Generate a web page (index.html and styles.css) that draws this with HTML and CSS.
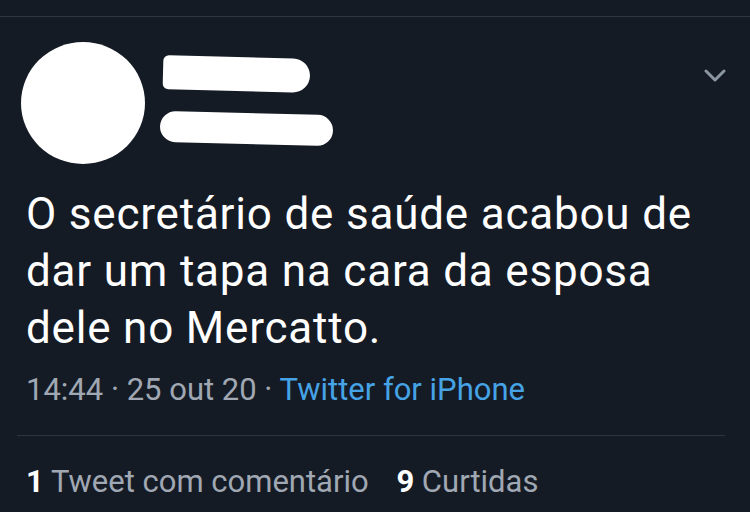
FILE: index.html
```html
<!DOCTYPE html>
<html>
<head>
<meta charset="utf-8">
<link rel="stylesheet" href="styles.css">
</head>
<body>
<div class="page">
  <div class="topline"></div>
  <div class="header">
    <div class="avatar"></div>
    <div class="names">
      <div class="bar bar1"></div>
      <div class="bar bar2"></div>
    </div>
    <svg class="chev" width="24" height="14" viewBox="0 0 24 14"><path d="M3 2 L12 11 L21 2" fill="none" stroke="#8b96a3" stroke-width="3" stroke-linecap="round" stroke-linejoin="round"/></svg>
  </div>
  <p class="tweet">O secretário de saúde acabou de dar um tapa na cara da esposa dele no Mercatto.</p>
  <div class="meta">14:44 · 25 out 20 · <span class="link">Twitter for iPhone</span></div>
  <div class="divider"></div>
  <div class="stats"><b>1</b> Tweet com comentário <span class="gap"></span><b>9</b> Curtidas</div>
</div>
</body>
</html>
```
FILE: styles.css
```css
html, body { margin: 0; padding: 0; }
body { background: #151b25; font-family: Roboto, "Noto Sans", sans-serif; }
.page { width: 750px; height: 512px; overflow: hidden; position: relative; }
.topline { height: 1px; background: #2d3744; margin-top: 16px; }
.header { display: flex; align-items: flex-start; height: 150px; margin-top: 25px; position: relative; }
.avatar { width: 124px; height: 122px; border-radius: 50%; background: #fff; margin-left: 21px; }
.names { display: flex; flex-direction: column; margin-left: 18px; margin-top: 15px; }
.bar { background: #fff; border-radius: 18px; }
.bar1 { width: 147px; height: 34px; border-radius: 6px 18px 18px 6px; transform: rotate(1.5deg); }
.bar2 { width: 173px; height: 31px; margin-top: 22px; margin-left: -3px; transform: rotate(1.5deg); }
.chev { position: absolute; right: 23px; top: 27px; }
.tweet { margin: 0; padding: 0 20px 0 26px; color: #fff; font-size: 44px; letter-spacing: 0.8px; line-height: 57px; margin-top: -6px; }
.meta { color: #a0a8b3; font-size: 31px; padding-left: 26px; margin-top: 15px; line-height: 36px; }
.link { color: #45a3e6; }
.divider { height: 1px; background: #2b3441; margin: 27px 25px 0 17px; }
.stats { color: #a0a8b3; font-size: 31px; padding-left: 26px; margin-top: 28px; line-height: 36px; }
.stats b { color: #fff; font-weight: 700; }
.gap { display: inline-block; width: 20px; }
```
